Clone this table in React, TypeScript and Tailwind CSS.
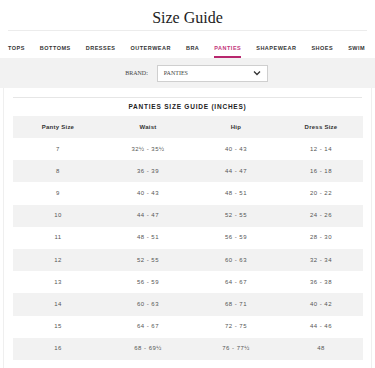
const tabs = ["TOPS", "BOTTOMS", "DRESSES", "OUTERWEAR", "BRA", "PANTIES", "SHAPEWEAR", "SHOES", "SWIM"];

const rows = [
  ["7", "32½ - 35½", "40 - 43", "12 - 14"],
  ["8", "36 - 39", "44 - 47", "16 - 18"],
  ["9", "40 - 43", "48 - 51", "20 - 22"],
  ["10", "44 - 47", "52 - 55", "24 - 26"],
  ["11", "48 - 51", "56 - 59", "28 - 30"],
  ["12", "52 - 55", "60 - 63", "32 - 34"],
  ["13", "56 - 59", "64 - 67", "36 - 38"],
  ["14", "60 - 63", "68 - 71", "40 - 42"],
  ["15", "64 - 67", "72 - 75", "44 - 46"],
  ["16", "68 - 69½", "76 - 77½", "48"],
];

const cols = ["w-[90px]", "w-[90px]", "w-[86px]", "flex-1"];

function App() {
  return (
    <div className="w-[375px] h-[368px] overflow-hidden bg-white font-['Liberation_Sans',sans-serif]">
      <div className="mx-2 h-[31px] flex items-center justify-center border-b border-[#ececec]">
        <h1 className="font-['Liberation_Serif',serif] text-[16px] text-[#222] pt-[6px]">Size Guide</h1>
      </div>

      <div className="flex gap-[15px] pl-2 h-[27px] whitespace-nowrap overflow-hidden">
        {tabs.map((t) => (
          <div key={t} className="flex flex-col justify-end">
            <span
              className={
                "text-[5.5px] font-bold tracking-[0.09em] " +
                (t === "PANTIES" ? "text-[#c2347a]" : "text-[#333]")
              }
            >
              {t}
            </span>
            <div className={"mt-[4px] h-[2px] " + (t === "PANTIES" ? "bg-[#b8276e]" : "bg-transparent")} />
          </div>
        ))}
      </div>

      <div className="h-[30px] bg-[#f2f2f2] flex items-center justify-center gap-[9px] pl-[18px]">
        <span className="font-['Liberation_Serif',serif] text-[6px] text-[#444]">BRAND:</span>
        <div className="w-[111px] h-[17px] bg-white border border-[#cfcfcf] flex items-center justify-between px-[6px]">
          <span className="font-['Liberation_Serif',serif] text-[6px] text-[#444]">PANTIES</span>
          <svg width="8" height="6" viewBox="0 0 8 6" fill="none">
            <path d="M1 1.5 L4 4.5 L7 1.5" stroke="#333" strokeWidth="1.3" />
          </svg>
        </div>
      </div>

      <div className="mx-[3px] border-x border-[#efefef] h-[280px] px-[9px]">
        <div className="h-[9px]" />
        <div className="border-t border-[#e6e6e6] h-[19px] flex items-center justify-center">
          <span className="text-[6.5px] font-bold tracking-[0.12em] text-[#222]">PANTIES SIZE GUIDE (INCHES)</span>
        </div>
        <div className="w-[350px]">
          <div className="flex h-[22px] items-center bg-[#f2f2f2] text-[6px] font-bold text-[#333] tracking-[0.04em]">
            {["Panty Size", "Waist", "Hip", "Dress Size"].map((h, i) => (
              <div key={h} className={cols[i] + " text-center"}>{h}</div>
            ))}
          </div>
          {rows.map((r, ri) => (
            <div
              key={r[0]}
              className={
                "flex h-[22.2px] items-center text-[6px] text-[#555] tracking-[0.08em] " +
                (ri % 2 === 1 ? "bg-[#f2f2f2]" : "bg-white")
              }
            >
              {r.map((c, i) => (
                <div key={i} className={cols[i] + " text-center"}>{c}</div>
              ))}
            </div>
          ))}
        </div>
      </div>
    </div>
  );
}

export default App;
